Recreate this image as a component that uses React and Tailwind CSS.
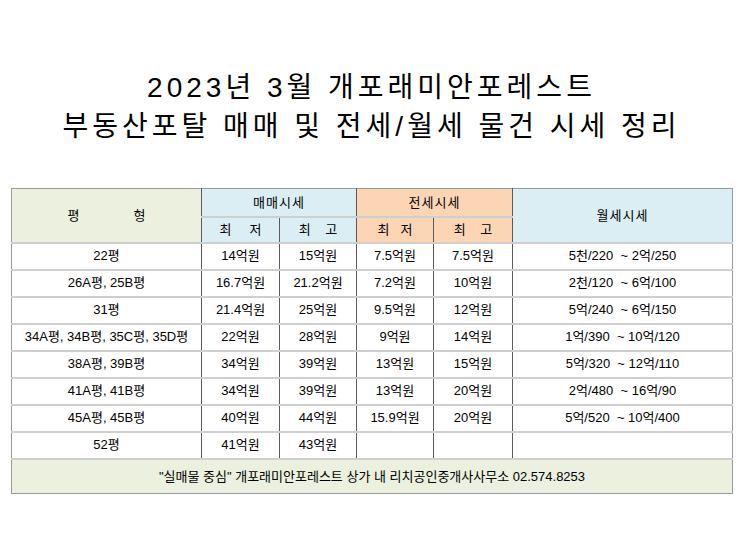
const rows = [
  { type: "22평", saleLow: "14억원", saleHigh: "15억원", jeonLow: "7.5억원", jeonHigh: "7.5억원", monthly: "5천/220  ~ 2억/250" },
  { type: "26A평, 25B평", saleLow: "16.7억원", saleHigh: "21.2억원", jeonLow: "7.2억원", jeonHigh: "10억원", monthly: "2천/120  ~ 6억/100" },
  { type: "31평", saleLow: "21.4억원", saleHigh: "25억원", jeonLow: "9.5억원", jeonHigh: "12억원", monthly: "5억/240  ~ 6억/150" },
  { type: "34A평, 34B평, 35C평, 35D평", saleLow: "22억원", saleHigh: "28억원", jeonLow: "9억원", jeonHigh: "14억원", monthly: "1억/390  ~ 10억/120" },
  { type: "38A평, 39B평", saleLow: "34억원", saleHigh: "39억원", jeonLow: "13억원", jeonHigh: "15억원", monthly: "5억/320  ~ 12억/110" },
  { type: "41A평, 41B평", saleLow: "34억원", saleHigh: "39억원", jeonLow: "13억원", jeonHigh: "20억원", monthly: "2억/480  ~ 16억/90" },
  { type: "45A평, 45B평", saleLow: "40억원", saleHigh: "44억원", jeonLow: "15.9억원", jeonHigh: "20억원", monthly: "5억/520  ~ 10억/400" },
  { type: "52평", saleLow: "41억원", saleHigh: "43억원", jeonLow: "", jeonHigh: "", monthly: "" },
];

const cell = "border-r border-r-[#5a5a5a] border-b-2 border-b-[#cfcfcf] text-center align-middle whitespace-pre";

export default function App() {
  return (
    <div
      className="min-h-[557px] w-[743px] bg-white text-black"
      style={{ fontFamily: '"Liberation Sans", "Noto Sans CJK KR", sans-serif' }}
    >
      <div className="pt-[68px] text-center text-[28px] leading-[39px] tracking-[4px]">
        <div>2023년 3월 개포래미안포레스트</div>
        <div>부동산포탈 매매 및 전세/월세 물건 시세 정리</div>
      </div>

      <div className="px-[11px] pt-[42px]">
        <table className="w-[721px] table-fixed border-collapse border border-[#9a9a9a] text-[13px]">
          <colgroup>
            <col className="w-[190px]" />
            <col className="w-[78px]" />
            <col className="w-[77px]" />
            <col className="w-[77px]" />
            <col className="w-[79px]" />
            <col className="w-[220px]" />
          </colgroup>
          <thead>
            <tr className="h-[28px]">
              <th rowSpan={2} className={`${cell} bg-[#ebf1de] font-normal`}>
                평{"               "}형
              </th>
              <th colSpan={2} className={`${cell} border-b-[#9a9a9a] bg-[#daeef3] font-normal tracking-[1px]`}>
                매매시세
              </th>
              <th colSpan={2} className={`${cell} border-b-[#9a9a9a] bg-[#fcd5b4] font-normal tracking-[1px]`}>
                전세시세
              </th>
              <th rowSpan={2} className={`${cell} border-r-[#9a9a9a] bg-[#daeef3] font-normal tracking-[1px]`}>
                월세시세
              </th>
            </tr>
            <tr className="h-[26px]">
              <th className={`${cell} bg-[#daeef3] font-normal`}>최     저</th>
              <th className={`${cell} bg-[#daeef3] font-normal`}>최    고</th>
              <th className={`${cell} bg-[#fcd5b4] font-normal`}>최   저</th>
              <th className={`${cell} bg-[#fcd5b4] font-normal`}>최    고</th>
            </tr>
          </thead>
          <tbody>
            {rows.map((row) => (
              <tr key={row.type} className="h-[27px]">
                <td className={cell}>{row.type}</td>
                <td className={cell}>{row.saleLow}</td>
                <td className={cell}>{row.saleHigh}</td>
                <td className={cell}>{row.jeonLow}</td>
                <td className={cell}>{row.jeonHigh}</td>
                <td className={`${cell} border-r-[#9a9a9a]`}>{row.monthly}</td>
              </tr>
            ))}
            <tr className="h-[35px]">
              <td colSpan={6} className="bg-[#ebf1de] text-center align-middle text-[13px]">
                "실매물 중심" 개포래미안포레스트 상가 내 리치공인중개사사무소 02.574.8253
              </td>
            </tr>
          </tbody>
        </table>
      </div>
    </div>
  );
}
